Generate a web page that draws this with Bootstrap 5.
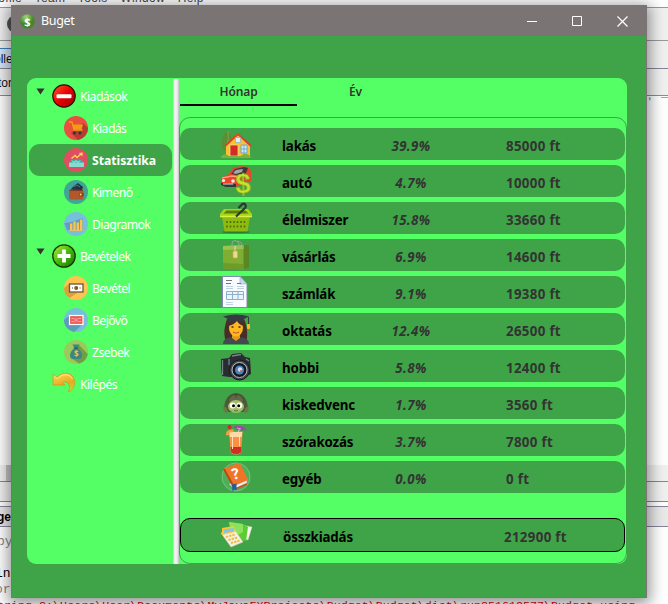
<!DOCTYPE html>
<html lang="hu">
<head>
<meta charset="utf-8">
<meta name="viewport" content="width=device-width, initial-scale=1">
<title>Buget</title>
<link href="https://cdn.jsdelivr.net/npm/bootstrap@5.3.0/dist/css/bootstrap.min.css" rel="stylesheet">
<style>
:root{--dark:#3fa447;--lime:#54ff66;--ink:#333}
body{width:668px;height:604px;font-family:"Noto Sans","Open Sans",sans-serif;font-size:12px;line-height:16px;background:#fff}
svg{display:block;flex:none}
/* desktop behind the window */
.desk{left:0;top:0;width:668px;height:604px;background:#fff}
.band{left:0;width:668px}
.bit{white-space:pre;font-family:"Liberation Sans",sans-serif;font-size:12px;line-height:14px}
.mono{font-family:"Liberation Mono",monospace;font-size:13px}
.console{left:-3px;top:599px;width:671px;height:5px;color:#b00000;font-size:11.7px}
/* application window */
.app-win{left:11px;top:5px;width:636px;height:593px;background:var(--dark);border:1px solid #7b7474;box-shadow:0 3px 14px 3px rgba(0,0,0,.42)}
.title-bar{height:30px;background:#7b7474;color:#fff;padding-left:8px;padding-right:18px}
.title-bar .cap{font-size:12.5px;letter-spacing:-.35px;margin-left:6px}
.ctl{gap:34px}
.panel{margin:42px 19px 0 15px;height:486px;border-radius:9px;background:var(--lime)}
.side{width:146px;padding-top:2px}
.item{height:32px;padding-left:25px;color:#fff;font-size:12.2px;letter-spacing:-.55px}
.item .txt{margin-left:4px;position:relative;top:1px}
.item.sub{padding-left:35px;margin:0 1px 0 2px;border-radius:11px}
.item.sel{background:var(--dark);font-weight:700;letter-spacing:0}
.arrow{width:9px;height:7px;margin:-9px 7px 0 -16px}
.split{width:6px;margin-top:1px;height:485px;background:linear-gradient(90deg,#c5c5c5,#f3f3f3 30%,#ececec 70%,#bdbdbd)}
.tabs{height:28px;color:var(--ink);font-weight:600;padding-left:1px}
.tabs .tb{width:117px;height:28px;padding-top:6px;border-bottom:2px solid transparent;letter-spacing:-.1px}
.tabs .on{border-color:#000}
.list{margin-top:11px;height:447px;border:1px solid var(--dark);border-radius:11px;padding:10px 1px 0 0}
.line{display:grid;grid-template-columns:40px 62px 99px 60px 64px 1fr;height:32px;margin-bottom:5px;background:var(--dark);border-radius:10px;align-items:center;font-weight:700;font-size:13.3px;color:var(--ink);letter-spacing:-.15px}
.line .nm{color:#000;grid-column:3}
.line .pc{font-style:italic;text-align:center;grid-column:4;letter-spacing:.4px}
.line .am{grid-column:6;white-space:nowrap;letter-spacing:.32px;padding-left:1px}
.line span{position:relative;top:2px}
.line svg{grid-column:2}
.line.sum{height:34px;margin-top:25px;border:1px solid #000}
.line.sum .am{padding-left:0;margin-left:-2px}
</style>
</head>
<body class="position-relative overflow-hidden m-0">
<div class="desk position-absolute overflow-hidden">
  <div class="position-absolute band" style="top:7px;height:34px;background:#f0f0f0;border-top:1px solid #999;border-bottom:1px solid #999"></div>
  <div class="position-absolute band" style="top:41px;height:55px;background:#f0f0f0;border-bottom:1px solid #6f93b5"></div>
  <div class="position-absolute band" style="top:68px;height:1px;background:#858598"></div>
  <div class="position-absolute" style="left:0;top:48px;width:12px;height:20px;background:#d5e6f8;border-top:1px solid #3c7fb8"></div>
  <div class="position-absolute rounded-circle" style="left:7px;top:15px;width:18px;height:18px;background:#555"></div>
  <div class="position-absolute band" style="top:465px;height:37px;background:#f0f0f0;border-bottom:1px solid #858598"></div>
  <div class="position-absolute band" style="top:481px;height:1px;background:#888"></div>
  <div class="position-absolute" style="left:6px;top:465px;width:8px;height:16px;background:#c4c4c4"></div>
  <div class="position-absolute band" style="top:506px;height:21px;background:#e9e9e9;border-top:1px solid #858598;border-bottom:1px solid #858598"></div>
  <div class="position-absolute bit" style="left:-6px;top:-9px;color:#444;word-spacing:9px;letter-spacing:.35px">rofile Team Tools Window Help</div>
  <div class="position-absolute bit" style="left:-6px;top:52px;color:#112">olle</div>
  <div class="position-absolute bit" style="left:-2px;top:76px;color:#112">tor</div>
  <div class="position-absolute bit fw-bold" style="left:-3px;top:510px;color:#000">ge</div>
  <div class="position-absolute bit mono" style="left:-3px;top:535px;color:#888">by</div>
  <div class="position-absolute bit mono" style="left:-5px;top:567px;color:#000">ind</div>
  <div class="position-absolute bit mono" style="left:-5px;top:583px;color:#888">ore</div>
  <div class="position-absolute bit" style="left:648px;top:88px;color:#47617c">,</div>
  <div class="position-absolute" style="left:661px;top:97px;width:7px;height:1px;background:#b9a083"></div>
</div>

<main class="app-win position-absolute">
  <header class="title-bar d-flex align-items-center">
    <svg width="15" height="15" viewBox="0 0 15 15"><circle cx="7.5" cy="7.5" r="7.3" fill="url(#gDollar)"/><text x="7.5" y="11.6" text-anchor="middle" font-size="11" font-weight="700" fill="#fff" font-family="Open Sans,sans-serif">$</text></svg>
    <span class="cap">Buget</span>
    <div class="ctl d-flex align-items-center ms-auto">
      <svg width="11" height="11" viewBox="0 0 11 11"><path d="M0 5.5h10" stroke="#fff"/></svg>
      <svg width="11" height="11" viewBox="0 0 11 11"><path d="M.5.5h9v9h-9z" stroke="#fff" fill="none"/></svg>
      <svg width="11" height="11" viewBox="0 0 11 11"><path d="M.5.5l10 10M10.500.5l-10 10" stroke="#fff" stroke-width="1.200"/></svg>
    </div>
  </header>
  <div class="panel d-flex overflow-hidden">
    <nav class="side">
      <div class="item d-flex align-items-center"><svg class="arrow" viewBox="0 0 9 7"><path d="M.5.5h8L4.500 6.500z" fill="#333"/></svg>
        <svg width="24" height="24" viewBox="0 0 24 24"><circle cx="12" cy="12" r="11.200" fill="url(#gRed)" stroke="#2a0a00" stroke-width="1.200"/><rect x="4.500" y="10.300" width="15" height="4" rx="1" fill="#fff"/></svg><span class="txt">Kiadások</span></div>
      <div class="item sub d-flex align-items-center">
        <svg width="24" height="24" viewBox="0 0 24 24"><circle cx="12" cy="12" r="12" fill="#e84f3f"/><path d="M19 7l5 5a12 12 0 0 1-10 12L7 17z" fill="#b93a33"/><path d="M5 6h3l2 8h8.500" stroke="#f39c12" stroke-width="1.300" fill="none"/><path d="M8.300 8.500H19l-1.500 5H9.700z" fill="#f39c12"/><circle cx="10.500" cy="17" r="1.500" fill="#2c3440"/><circle cx="16" cy="17" r="1.500" fill="#2c3440"/></svg><span class="txt">Kiadás</span></div>
      <div class="item sub sel d-flex align-items-center">
        <svg width="24" height="24" viewBox="0 0 24 24"><circle cx="12" cy="12" r="12" fill="#e04f5f"/><path d="M7.500 11.500h10l2 4.500v3h-14v-3z" fill="#32a99c"/><path d="M5 14.500h15V19H5z" fill="#84dbd1"/><path d="M8 12.500l2 2 2-2 2 2 2-2" stroke="#d5f5ef" fill="none"/><path d="M7.500 10.500l3.500-3 2 2 4.500-4" stroke="#ffd05b" stroke-width="1.400" fill="none"/><path d="M14.800 5l4-.500-.500 4z" fill="#ffd05b"/></svg><span class="txt">Statisztika</span></div>
      <div class="item sub d-flex align-items-center">
        <svg width="24" height="24" viewBox="0 0 24 24"><circle cx="12" cy="12" r="12" fill="#40a596"/><path d="M7 9l3-3 4-3 5 4-1 3H7z" fill="#1f3547"/><path d="M10 7l3-2 3 2" stroke="#547187" fill="none"/><path d="M5 9.500l13 .500q1.500 0 1.500 1.500V18q0 1.500-1.500 1.500H7Q5 19.500 5 18z" fill="#b0572c"/><path d="M5.500 10.500H19" stroke="#7c3d22"/><rect x="15" y="12.800" width="5" height="3.600" rx="1.500" fill="#8b4422"/><circle cx="16.700" cy="14.600" r="1" fill="#ffd05b"/></svg><span class="txt">Kimenő</span></div>
      <div class="item sub d-flex align-items-center">
        <svg width="24" height="24" viewBox="0 0 24 24"><circle cx="12" cy="12" r="12" fill="#77c0dc"/><path d="M.5 11l7-1 11-4v12H3z" fill="#5f9fbd"/><path d="M7.200 18v-6.500M10.500 18V9.500M13.800 18v-7.500M17.100 18V7.500" stroke="#fbc251" stroke-width="2.400"/><path d="M5.500 18.300h13" stroke="#fbc251"/></svg><span class="txt">Diagramok</span></div>
      <div class="item d-flex align-items-center"><svg class="arrow" viewBox="0 0 9 7"><path d="M.5.5h8L4.500 6.500z" fill="#333"/></svg>
        <svg width="24" height="24" viewBox="0 0 24 24"><circle cx="12" cy="12" r="11.200" fill="url(#gGreen)" stroke="#123a00" stroke-width="1.300"/><path d="M12 5.500v13M5.500 12h13" stroke="#fff" stroke-width="3.800"/></svg><span class="txt">Bevételek</span></div>
      <div class="item sub d-flex align-items-center">
        <svg width="24" height="24" viewBox="0 0 24 24"><circle cx="12" cy="12" r="12" fill="#ffc34f"/><path d="M0 12l5-4v8.500h9L5.500 22A12 12 0 0 1 0 12z" fill="#d6a23c"/><rect x="5.500" y="8" width="13.500" height="8" fill="#fff" stroke="#6b553b" stroke-width="1.300"/><circle cx="12.200" cy="12" r="2" fill="#7b5a2c"/><path d="M8 12h1M15.600 12h1" stroke="#a2783b" stroke-width="1.500"/></svg><span class="txt">Bevétel</span></div>
      <div class="item sub d-flex align-items-center">
        <svg width="24" height="24" viewBox="0 0 24 24"><circle cx="12" cy="12" r="12" fill="#77c0dc"/><path d="M0 12l5-4v9h13l-8 7A12 12 0 0 1 0 12z" fill="#5c9cb7"/><rect x="5.500" y="7.500" width="13.500" height="9" fill="#f05a5a" stroke="#fff" stroke-width="1.200"/><path d="M7.500 10.500h3M14 10.500h3M7.500 13.500h3M14 13.500h3" stroke="#ffb2ad" stroke-width=".8"/><circle cx="12.200" cy="12" r="1.800" fill="#f98d88"/></svg><span class="txt">Bejővő</span></div>
      <div class="item sub d-flex align-items-center">
        <svg width="24" height="24" viewBox="0 0 24 24"><circle cx="12" cy="12" r="12" fill="#9bc95a"/><path d="M15 5l8.800 9A12 12 0 0 1 15 23.600L7 18z" fill="#6f9f45"/><path d="M8.500 4.500h7l-2 3.500c3 2 4.700 5 4.500 8-.2 2-1.500 3-3 3H9c-1.500 0-2.800-1-3-3-.200-3 1.500-6 4.500-8z" fill="#3b8686"/><path d="M9.800 8h4.400" stroke="#255d61" stroke-width="1.200"/><text x="12" y="16.800" text-anchor="middle" font-size="8" font-weight="700" fill="#ffc323" font-family="Open Sans,sans-serif">$</text></svg><span class="txt">Zsebek</span></div>
      <div class="item d-flex align-items-center">
        <svg width="24" height="24" viewBox="0 0 24 24"><path d="M1 2l4 3.200C8.500 2 12 .8 15 1.300 20.500 2.200 23.500 7 22.500 12.500 21.800 16.500 19.500 19 16 20c2-3 2-7 0-9-1.600-1.600-4-1.500-5.800.2L13 13H1z" fill="url(#gGold)" stroke="#d79417" stroke-width=".7"/><path d="M2.500 4.500l3 2.200C10 1.500 17.500 1.500 20.500 7" stroke="#ffeb91" fill="none"/></svg><span class="txt">Kilépés</span></div>
    </nav>
    <div class="split"></div>
    <section class="flex-grow-1">
      <div class="tabs d-flex text-center"><div class="tb on">Hónap</div><div class="tb">Év</div></div>
      <div class="list">
        <div class="line">
          <svg width="32" height="32" viewBox="0 0 32 32"><path d="M8 2C4 5 1 12 1.500 18c.3 4 3 5 6.500 5 5 0 6-5 5-9S10 5 8 2z" fill="#5c8f35"/><path d="M8 3c0 5 0 12-1 20" stroke="#8ab652"/><path d="M6 16L18 5l12 12v11H6z" fill="#f7c12f"/><path d="M5 18L18 6l13 12" stroke="#d9402e" stroke-width="2" fill="none"/><path d="M10 17h8v11h-8z" fill="#d32a2a" stroke="#f4e4a4" stroke-width=".7"/><path d="M21 17h6v8h-6z" fill="#cfe9fb" stroke="#6ba6cc"/><path d="M24 17v8M21 21h6" stroke="#5f9ec5" stroke-width=".8"/><rect x="15.500" y="9.500" width="5" height="5" fill="#d9effb" stroke="#84b4d0" stroke-width=".7"/><path d="M1 29q3-5 8-1h12q5-5 10 1v1H1z" fill="#7ab23c"/></svg>
          <span class="nm">lakás</span><span class="pc">39.9%</span><span class="am">85000 ft</span></div>
        <div class="line">
          <svg width="32" height="32" viewBox="0 0 32 32"><path d="M1 13l8-4 4-6 7-2 8 1 3 4v10l-10 5-14 1-6-3z" fill="#e9452c"/><path d="M11 9l4-5 9-2 4 1-2 5-9 2z" fill="#3d3838"/><path d="M13 8l3-3 7-1-1 3-6 2z" fill="#9fa7ad"/><path d="M2 13l10-2 7 1" stroke="#ff9b7f" stroke-width="1.500" fill="none"/><circle cx="3.500" cy="15.500" r="1.600" fill="#f4efe4"/><circle cx="13" cy="16" r="1.800" fill="#f4efe4"/><path d="M1 18l15 1v3l-10 0-5-2z" fill="#3a3636"/><path d="M3 19h10" stroke="#ddd"/><text x="23" y="28" text-anchor="middle" font-size="27" font-weight="700" fill="#c4e52c" stroke="#86ab18" stroke-width=".7" font-family="Liberation Sans,sans-serif">$</text></svg>
          <span class="nm">autó</span><span class="pc">4.7%</span><span class="am">10000 ft</span></div>
        <div class="line">
          <svg width="32" height="32" viewBox="0 0 32 32"><ellipse cx="16" cy="30" rx="14" ry="1.300" fill="#2c7a35"/><path d="M0 12l4-5h24l4 5v3H0z" fill="#a9d413"/><path d="M3.500 11.500L6.500 8.500h19l3 3z" fill="#5b7f08"/><path d="M2 15h28l-2.500 14.500h-23z" fill="#8fba10"/><path d="M0 14.500h32" stroke="#d4f04b" stroke-width="1.500"/><path d="M7 19v2M10.500 19v2M14 19v2M17.500 19v2M21 19v2M24.500 19v2M7 23.500v2M10.500 23.500v2M14 23.500v2M17.500 23.500v2M21 23.500v2M24.500 23.500v2" stroke="#4d7306" stroke-width="1.600"/><path d="M16 14.500l9.500-9M18.500 6L22.500 2q3-1.500 3.500 3.500" stroke="#2f3338" stroke-width="2.200" fill="none"/></svg>
          <span class="nm">élelmiszer</span><span class="pc">15.8%</span><span class="am">33660 ft</span></div>
        <div class="line">
          <svg width="32" height="32" viewBox="0 0 32 32"><path d="M3 7l20-1 6 0v23l-6 1.500L3 29.500z" fill="#7fae33"/><path d="M23.500 6h5.500v23l-5.500 1.500z" fill="#5b8722"/><path d="M3 7l20.500-1v4L3 11z" fill="#9ac54b"/><path d="M12 8V5q0-3.500 3-3.500T19 5v3M17 2.500q5-1 6 7" stroke="#98a893" stroke-width="1" fill="none"/><path d="M15 7v5" stroke="#ddd"/><rect x="13" y="12" width="4.500" height="7" rx="1" fill="#ead99b" stroke="#e1a33b" stroke-width=".8"/><path d="M3 24l20.500 1v5.500L3 29.500z" fill="#6d9c2b"/></svg>
          <span class="nm">vásárlás</span><span class="pc">6.9%</span><span class="am">14600 ft</span></div>
        <div class="line">
          <svg width="32" height="32" viewBox="0 0 32 32"><path d="M2.500.500H20l7 7.500v23.500H2.500z" fill="#f8fbff" stroke="#8186b5"/><path d="M20 .5v7.500h7z" fill="#c9d9eb" stroke="#9da9ca" stroke-width=".7"/><path d="M6 4.500h6M6 7.500h5M17 7.500h4" stroke="#777" stroke-width="1.200"/><path d="M6 10.500h7M17 10.500h7M6 12.500h7M17 12.500h7M6 26.500h7M6 28.500h7" stroke="#bfd2e1"/><path d="M6.500 15.500h17v8h-17zM12.500 15.500v8M18 15.500v8M6.500 18.500h17" fill="#eaf4fb" stroke="#8db1cc"/></svg>
          <span class="nm">számlák</span><span class="pc">9.1%</span><span class="am">19380 ft</span></div>
        <div class="line">
          <svg width="32" height="32" viewBox="0 0 32 32"><path d="M7 6Q3 17 5 26h22q1-12-3-20z" fill="#4b2d28"/><path d="M3 31q0-6 8-6.500h10q8 .5 8 6.500z" fill="#434950"/><path d="M12 20h8v5l-4 3-4-3z" fill="#e49a16"/><ellipse cx="16" cy="15" rx="7" ry="8.500" fill="#ffb820"/><path d="M8 13q6-1 9-5 2 4 7 5V6H8z" fill="#4b2d28"/><path d="M11.500 14h2M18.500 14h2" stroke="#3e2a23" stroke-width="1.600"/><path d="M13 19q3 2 6 0" stroke="#c65b27" stroke-width="1.200" fill="none"/><path d="M3 3.500Q16-.500 29 3.500L24 6v3q-8-2.500-16 0V6z" fill="#343b42"/><path d="M28.500 4v8" stroke="#343b42"/><rect x="27" y="11" width="3" height="5" rx="1" fill="#ffb820"/></svg>
          <span class="nm">oktatás</span><span class="pc">12.4%</span><span class="am">26500 ft</span></div>
        <div class="line">
          <svg width="32" height="32" viewBox="0 0 32 32"><path d="M1 9l8-1 3-4 9-1 4 4 5 1 1 16-6 3H9l-7-1Q.5 18 1 9z" fill="#292d31"/><path d="M2.500 10v15M9 9v6M12 6l9-1.500M26 9l3 2" stroke="#788088" stroke-width="1.300"/><circle cx="19.500" cy="20" r="10" fill="#41474e" stroke="#15181c"/><circle cx="19.500" cy="20" r="7.500" fill="#15191f" stroke="#b9c0c6" stroke-width="1"/><circle cx="19.500" cy="20" r="4.500" fill="#4785bc"/><circle cx="20" cy="19.500" r="2.200" fill="#e6d6e9"/><circle cx="21" cy="21" r="1" fill="#c25840"/></svg>
          <span class="nm">hobbi</span><span class="pc">5.8%</span><span class="am">12400 ft</span></div>
        <div class="line">
          <svg width="32" height="32" viewBox="0 0 32 32"><path d="M4 24Q4 7 16 6q12 1 12 18l-5 1H9z" fill="#4d5b3a"/><path d="M8 13l4-5h8l4 5-3 5H11zM16 6v5" fill="#62684a" stroke="#3d492e" stroke-width=".8"/><path d="M3 20q4-1 5 5-4 3-5-5zM29 20q-4-1-5 5 4 3 5-5z" fill="#6c7843"/><ellipse cx="16" cy="19.500" rx="8" ry="6.500" fill="#9fbd63"/><circle cx="12.700" cy="18.500" r="3" fill="#fff"/><circle cx="19.300" cy="18.500" r="3" fill="#fff"/><circle cx="13.500" cy="18.700" r="1.500"/><circle cx="18.700" cy="18.700" r="1.500"/><path d="M14 23.500q2 1 4 0" stroke="#566f34" fill="none"/></svg>
          <span class="nm">kiskedvenc</span><span class="pc">1.7%</span><span class="am">3560 ft</span></div>
        <div class="line">
          <svg width="32" height="32" viewBox="0 0 32 32"><path d="M20 3l-3 9" stroke="#e8d9c5"/><path d="M13 4q2-3 6-2 6 0 7.500 5-3-2-5 0-2-3-4-1-1-3-4.500-2z" fill="#a344ad"/><path d="M17 4l4 1" stroke="#e19be0"/><path d="M9 7.500h13.500l-1.300 21.500q-5.500 3-10.500 0z" fill="#ff8f45"/><path d="M9.300 8h13l-.5 5H9.700z" fill="#ffd9a8"/><path d="M10.500 23h11L21 28.500q-5 3-10 0z" fill="#cf2f24"/><path d="M12.500 11v14M19.500 10v12" stroke="#ffe0b8"/><path d="M6 11.500q-1-6.500 8-6l-1 2.500q-5 0-4 3z" fill="#ff9b3f"/><circle cx="9.500" cy="3" r="2" fill="#dd2032"/></svg>
          <span class="nm">szórakozás</span><span class="pc">3.7%</span><span class="am">7800 ft</span></div>
        <div class="line">
          <svg width="32" height="32" viewBox="0 0 32 32"><circle cx="16" cy="16" r="14" fill="#4eae5a" stroke="#83c88a" stroke-width=".8"/><path d="M9 23l6 5 12-6v-5" fill="#eee" stroke="#b3a696" stroke-width=".7"/><path d="M3 8l15-6q2 0 3 2l7 15-14 6q-2 0-3-2z" fill="#f07428"/><path d="M3 8l8 15q1 3 4 5v-2L5 8z" fill="#b94710"/><path d="M15 28l12-5" stroke="#c65316" stroke-width="1.400"/><text x="15.500" y="18" text-anchor="middle" font-size="15" font-weight="700" fill="#fff" transform="rotate(-15 16 13)" font-family="Open Sans,sans-serif">?</text><path d="M12 23.500l4.500-1v7l-2-1-2 2z" fill="#185fa8"/></svg>
          <span class="nm">egyéb</span><span class="pc">0.0%</span><span class="am">0 ft</span></div>
        <div class="line sum">
          <svg width="32" height="32" viewBox="0 0 32 32"><path d="M9 4l22 4-4 13-15-4z" fill="#f5f6e9" stroke="#c5d0b7" stroke-width=".5"/><path d="M8 3l14 2 5 3-2 14-14-3z" fill="#5dcb36"/><path d="M8 3l14 2v8L11 19z" fill="#8ae35d"/><path d="M0 14l13-4 9 13-12 5z" fill="#f4f0dd" stroke="#d5cdb0" stroke-width=".6"/><path d="M1 9l12-2 1 6-13 3z" fill="#ffc536"/><path d="M2.500 10.500l10-1.500.8 3-10 2z" fill="#79c8ed"/><path d="M5 18l9-2.500M7.500 21l9-2.500M10 24l9-2.500" stroke="#edbb3d" stroke-width="2" stroke-dasharray="2.300 1"/></svg>
          <span class="nm">összkiadás</span><span class="am">212900 ft</span></div>
      </div>
    </section>
  </div>
</main>
<div class="position-absolute bit mono console overflow-hidden">tring C:\Users\User\Documents\MyJavaFXProjects\Budget\Budget\dist\run851612577\Budget using</div>
<svg width="0" height="0" class="position-absolute"><defs>
  <radialGradient id="gDollar" cx=".4" cy=".2"><stop stop-color="#a6d774"/><stop offset="1" stop-color="#45862a"/></radialGradient>
  <linearGradient id="gRed" x2="1" y2="1"><stop stop-color="#ff5a2e"/><stop offset=".5" stop-color="#e80000"/><stop offset="1" stop-color="#9b0000"/></linearGradient>
  <linearGradient id="gGreen" x2="1" y2="1"><stop stop-color="#b5f03c"/><stop offset=".5" stop-color="#45b80d"/><stop offset="1" stop-color="#187000"/></linearGradient>
  <linearGradient id="gGold" x2=".4" y2="1"><stop stop-color="#ffd95b"/><stop offset=".7" stop-color="#e9a91f"/><stop offset="1" stop-color="#b9d63b"/></linearGradient>
</defs></svg>
<script src="https://cdn.jsdelivr.net/npm/bootstrap@5.3.0/dist/js/bootstrap.bundle.min.js"></script>
</body>
</html>
